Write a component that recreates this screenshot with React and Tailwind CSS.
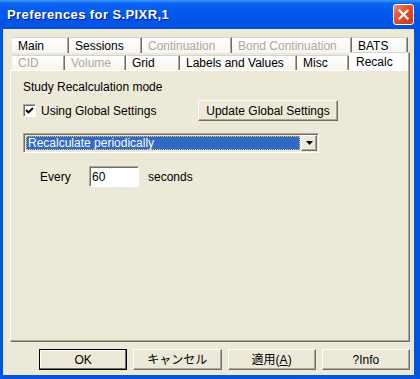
import React from 'react';

const row1 = [
  { label: 'Main', w: 'w-[57px]' },
  { label: 'Sessions', w: 'w-[73px]' },
  { label: 'Continuation', w: 'w-[90px]', off: true },
  { label: 'Bond Continuation', w: 'w-[120px]', off: true },
  { label: 'BATS', w: 'w-[56px]' },
];

const row2 = [
  { label: 'CID', w: 'w-[53px]', off: true },
  { label: 'Volume', w: 'w-[61px]', off: true },
  { label: 'Grid', w: 'w-[54px]' },
  { label: 'Labels and Values', w: 'w-[117px]' },
  { label: 'Misc', w: 'w-[52px]' },
];

const raised =
  'border border-t-white border-l-white border-r-[#716F64] border-b-[#716F64] shadow-[inset_-1px_-1px_0_#ACA899]';
const sunken =
  'border border-t-[#ACA899] border-l-[#ACA899] border-r-white border-b-white shadow-[inset_1px_1px_0_#716F64]';

const Tab = ({ label, w, off, h = 'h-[16px]' }) => (
  <div
    className={`${w} ${h} shrink-0 flex items-center pl-[6px] bg-gradient-to-b from-white to-[#F6F5F0] border-t border-t-[#D6D4C8] border-r border-r-[#716F64] shadow-[inset_-1px_0_0_#ACA899] rounded-tl-[2px] ${
      off ? 'text-[#ACA899]' : 'text-black'
    }`}
  >
    {label}
  </div>
);

const Button = ({ children, def }) => (
  <div
    className={`w-[89px] h-[21px] flex items-center justify-center ${
      def
        ? 'border border-black shadow-[inset_-1px_-1px_0_#716F64,inset_1px_1px_0_white]'
        : raised
    }`}
  >
    {children}
  </div>
);

export default function App() {
  return (
    <div className="w-[420px] h-[379px] flex flex-col bg-[#0055E5] text-[12px] text-black font-['Liberation_Sans','Noto_Sans_CJK_JP',sans-serif] select-none">
      {/* title bar */}
      <div className="h-[29px] shrink-0 flex items-center pl-[7px] pr-[6px] bg-[linear-gradient(to_bottom,#3d95ff_0%,#0a64f0_12%,#0058ee_45%,#0052e0_100%)]">
        <span className="text-white font-bold text-[13px] tracking-[0.4px] [text-shadow:1px_1px_0_#0a1e80]">
          Preferences for S.PIXR,1
        </span>
        <div className="ml-auto w-[21px] h-[21px] rounded-[3px] border border-white bg-[linear-gradient(135deg,#f08a6a_0%,#e0502c_45%,#c9391a_100%)] flex items-center justify-center">
          <svg width="11" height="11" viewBox="0 0 11 11">
            <path d="M1.5 1.5 L9.5 9.5 M9.5 1.5 L1.5 9.5" stroke="white" strokeWidth="2.2" strokeLinecap="square" />
          </svg>
        </div>
      </div>

      {/* body */}
      <div className="flex-1 ml-[3px] mr-[6px] mb-[4px] bg-[#ECE9D8] flex flex-col pt-[8px] pl-[7px] pr-[4px] pb-[5px]">
        <div className="ml-[2px] flex">
          {row1.map((t) => (
            <Tab key={t.label} {...t} />
          ))}
        </div>
        <div className="ml-[2px] mt-[2px] flex items-end h-[15px]">
          {row2.map((t) => (
            <Tab key={t.label} {...t} h="h-[15px]" />
          ))}
          <div className="relative top-[1px] z-10 w-[61px] h-[19px] shrink-0 flex items-center pl-[6px] bg-white border-t border-t-[#D6D4C8] border-l border-l-white border-r border-r-[#716F64] shadow-[inset_-1px_0_0_#ACA899]">
            Recalc
          </div>
        </div>

        {/* panel */}
        <div className="flex-1 border border-t-white border-l-white border-r-[#716F64] border-b-[#716F64] shadow-[inset_-1px_-1px_0_#ACA899] pt-[9px] pl-[12px]">
          <div className="h-[14px] leading-[14px]">Study Recalculation mode</div>
          <div className="mt-[6px] flex items-center h-[21px]">
            <div className="w-[175px] flex items-center">
              <div className={`w-[13px] h-[13px] bg-white ${sunken} flex items-center justify-center`}>
                <svg width="9" height="9" viewBox="0 0 9 9">
                  <path d="M1 4 L3.5 6.5 L8 2" fill="none" stroke="black" strokeWidth="1.8" />
                </svg>
              </div>
              <span className="ml-[5px]">Using Global Settings</span>
            </div>
            <div className={`w-[140px] h-[21px] flex items-center justify-center ${raised}`}>
              Update Global Settings
            </div>
          </div>
          <div className={`mt-[12px] w-[296px] h-[20px] flex ${sunken} p-[1px]`}>
            <div className="flex-1 m-[1px] bg-[#316AC5] text-white flex items-center pl-[2px] outline-1 outline-dotted outline-[#E6C463] -outline-offset-1">
              Recalculate periodically
            </div>
            <div className={`w-[16px] bg-[#ECE9D8] flex items-center justify-center ${raised}`}>
              <svg width="7" height="4" viewBox="0 0 7 4">
                <path d="M0 0 H7 L3.5 4 Z" fill="black" />
              </svg>
            </div>
          </div>
          <div className="mt-[13px] flex items-center h-[21px]">
            <span className="ml-[17px] w-[49px]">Every</span>
            <div className={`w-[50px] h-[21px] bg-white ${sunken} flex items-center pl-[2px]`}>60</div>
            <span className="ml-[9px]">seconds</span>
          </div>
        </div>

        {/* buttons */}
        <div className="mt-[7px] ml-[29px] flex gap-[6px]">
          <Button def>OK</Button>
          <Button>キャンセル</Button>
          <Button>
            <span>
              適用(<span className="underline">A</span>)
            </span>
          </Button>
          <Button>?Info</Button>
        </div>
      </div>
    </div>
  );
}
